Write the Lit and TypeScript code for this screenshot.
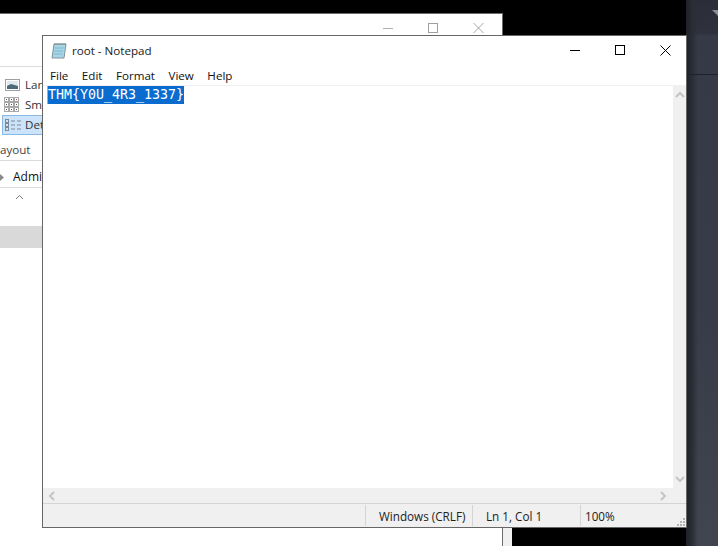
import { LitElement, html, css, svg } from "lit";
import { customElement } from "lit/decorators.js";

@customElement("app-root")
export class AppRoot extends LitElement {
  static styles = css`
    :host { display: block; }
    .desk { position: relative; width: 718px; height: 546px; background: #000; overflow: hidden; font-family: "Open Sans", "Noto Sans", sans-serif; color: #1a1a1a; }
    .side { position: absolute; left: 686px; top: 0; width: 32px; height: 546px; background: linear-gradient(90deg, #1e2027 0, #2a2d36 6px, rgba(0,0,0,0) 12px), linear-gradient(180deg, #2a2d37 0, #2f323c 34px, #363a46 35px, #383c48 320px, #41454f 546px); box-sizing: border-box; }
    .side-top { height: 75px; border-bottom: 1px solid #20222a; box-sizing: border-box; position: relative; }
    .back { position: absolute; left: 0; top: 13px; width: 503px; height: 533px; background: #fff; border-right: 1px solid #6b6b6b; box-sizing: border-box; border-top: 1px solid #6b6b6b; }
    .back-ctrl { position: absolute; left: 360px; top: 0; display: block; }
    .ribbon-line { position: absolute; left: 0; right: 0; height: 1px; background: #dcdcdc; }
    .item { position: absolute; left: 0; width: 70px; height: 20px; font-size: 11.6px; line-height: 20px; white-space: nowrap; display: flex; align-items: center; gap: 5px; padding-left: 4px; box-sizing: border-box; color: #333; }
    .item svg { flex: none; }
    .item.sel { background: #cce4fa; border: 1px solid #8bb9e5; padding-left: 1px; left: 2px; gap: 3px; }
    .layout { position: absolute; left: 0; top: 128px; font-size: 11.6px; line-height: 16px; color: #444; }
    .admin { position: absolute; left: 13px; top: 154px; font-size: 12px; line-height: 18px; color: #111; }
    .graybar { position: absolute; left: 0; top: 212px; width: 42px; height: 22px; background: #d9d9d9; }
    .arrow { position: absolute; display: block; }
    .note { position: absolute; left: 42px; top: 35px; width: 645px; height: 493px; background: #fff; border: 1px solid #666; box-sizing: border-box; display: flex; flex-direction: column; }
    .title { height: 29px; display: flex; align-items: center; padding-left: 8px; gap: 5px; font-size: 11.6px; flex: none; position: relative; }
    .title svg { flex: none; }
    .controls { position: absolute; right: 0; top: 0; display: block; }
    .menu { height: 20px; display: flex; align-items: center; padding-left: 7px; gap: 13.500px; font-size: 11.6px; flex: none; color: #111; }
    .rule { height: 1px; background: #f1f1f4; flex: none; }
    .content { flex: 1; display: flex; min-height: 0; }
    .text { flex: 1; padding: 0 0 0 4px; font-family: "DejaVu Sans Mono", "Liberation Mono", monospace; font-size: 13.3px; }
    .sel-text { background: #0a6ccf; color: #fff; display: block; width: 136px; height: 18px; line-height: 18px; border-left: 1px solid #e8a33d; white-space: nowrap; }
    .vbar { width: 13px; background: #f0f0f0; flex: none; display: flex; flex-direction: column; justify-content: space-between; align-items: center; padding: 5px 0; box-sizing: border-box; }
    .hbar { height: 16px; background: #f0f0f0; flex: none; display: flex; justify-content: space-between; align-items: center; padding: 0 19px 0 5px; box-sizing: border-box; border-bottom: 1px solid #d4d4d4; }
    .status { height: 23px; background: #f0f0f0; flex: none; display: flex; font-size: 11.7px; color: #222; position: relative; }
    .status .fill { flex: 1; }
    .cell { border-left: 1px solid #d4d4d4; box-sizing: border-box; display: flex; align-items: center; padding-left: 5px; margin: 1px 0; padding-top: 1px; }
    .c1 { width: 107px; padding-left: 13px; }
    .c2 { width: 108px; padding-left: 13px; }
    .c3 { width: 106px; padding-left: 4px; }
    .grip { position: absolute; right: 1px; bottom: 1px; display: block; }
    .sliver { position: absolute; left: 503px; top: 528px; width: 9px; height: 18px; background: #f0f0f0; box-sizing: border-box; }
  `;

  private chev(d: string, w = 10, h = 8) {
    return html`<svg width=${w} height=${h} viewBox="0 0 ${w} ${h}">${svg`<path d=${d} fill="none" stroke="#c4c4c4" stroke-width="2"/>`}</svg>`;
  }

  private cells() {
    const out = [];
    for (const y of [0, 5, 10]) {
      for (const x of [0, 5, 10]) {
        out.push(svg`<rect x=${x + 0.5} y=${y + 0.5} width="4" height="4" fill="#fff" stroke="#a8a8a8"/><rect x=${x + 2} y=${y + 2} width="1" height="1" fill=${y === 0 && x === 10 ? "#a04040" : "#555"}/>`);
      }
    }
    return out;
  }

  render() {
    return html`<div class="desk">
      <div class="side"><div class="side-top">
        <svg class="arrow" style="left:26px;top:10px" width="6" height="6" viewBox="0 0 6 6"><path d="M0 0h6v6z" fill="#8b8e96"/></svg>
      </div></div>

      <div class="back">
        <svg class="back-ctrl" width="142" height="24" viewBox="0 0 142 24">
          <path d="M23 14.500h10" stroke="#b0b0b0"/>
          <rect x="68.500" y="9.500" width="9" height="9" fill="none" stroke="#a0a0a0"/>
          <path d="M113.500 9l10 10M123.500 9l-10 10" stroke="#a8a8a8"/>
        </svg>
        <div class="ribbon-line" style="top:52px"></div>
        <div class="item" style="top:61px">
          <svg width="16" height="13" viewBox="0 0 16 13"><rect x="1.500" y=".5" width="14" height="11" fill="#fff" stroke="#9aa0a6"/><rect x="3" y="2" width="11" height="8" fill="#dfe8ec"/><path d="M3 7l4-2 7 2v3H3z" fill="#4a6a7c"/></svg><span>Large</span>
        </div>
        <div class="item" style="top:81px">
          <svg width="16" height="16" viewBox="0 0 16 16">${this.cells()}</svg><span>Small</span>
        </div>
        <div class="item sel" style="top:101px">
          <svg width="18" height="14" viewBox="0 0 18 14"><g fill="none" stroke="#7a8a99"><rect x="1.500" y="1.500" width="3" height="3"/><rect x="1.500" y="5.500" width="3" height="3"/><rect x="1.500" y="9.500" width="3" height="3"/><path d="M7 3h4M13 3h4M7 7h4M13 7h4M7 11h4M13 11h4"/></g></svg><span>Details</span>
        </div>
        <div class="ribbon-line" style="top:146px"></div>
        <div class="layout">ayout</div>
        <div class="ribbon-line" style="top:173px"></div>
        <svg class="arrow" style="left:0;top:159px" width="5" height="9" viewBox="0 0 5 9"><path d="M0 1l4 3.500L0 8z" fill="#8a8a8a"/></svg>
        <div class="admin">Administrator</div>
        <svg class="arrow" style="left:15px;top:180px" width="9" height="6" viewBox="0 0 9 6"><path d="M1 5l3.500-3.500L8 5" fill="none" stroke="#777"/></svg>
        <div class="graybar"></div>
      </div>

      <div class="sliver"></div>

      <div class="note">
        <div class="title">
          <svg width="16" height="17" viewBox="0 0 16 17"><path d="M3 2h12l-2 14H1z" fill="#a9d6e6" stroke="#7f929c"/><path d="M3.500 2h11" stroke="#666" stroke-dasharray="1 1"/><path d="M3.500 6h9M3 9h9M2.500 12h9" stroke="#7fb7cf"/></svg>
          <span>root - Notepad</span>
          <svg class="controls" width="138" height="29" viewBox="0 0 138 29">
            <path d="M22 14.500h10" stroke="#000"/>
            <rect x="67.500" y="9.500" width="9" height="9" fill="none" stroke="#000"/>
            <path d="M112.500 9.500l10 10M122.500 9.500l-10 10" stroke="#000"/>
          </svg>
        </div>
        <div class="menu"><span>File</span><span>Edit</span><span>Format</span><span>View</span><span>Help</span></div>
        <div class="rule"></div>
        <div class="content">
          <div class="text"><span class="sel-text">THM{Y0U_4R3_1337}</span></div>
          <div class="vbar">${this.chev("M1 6l4-4 4 4")}${this.chev("M1 2l4 4 4-4")}</div>
        </div>
        <div class="hbar">${this.chev("M6 1L2 5l4 4", 8, 10)}${this.chev("M2 1l4 4-4 4", 8, 10)}</div>
        <div class="status">
          <div class="fill"></div>
          <div class="cell c1">Windows (CRLF)</div>
          <div class="cell c2">Ln 1, Col 1</div>
          <div class="cell c3">100%</div>
          <svg class="grip" width="8" height="8" viewBox="0 0 8 8"><g fill="#b4b4b4"><rect x="6" y="0" width="2" height="2"/><rect x="3" y="3" width="2" height="2"/><rect x="6" y="3" width="2" height="2"/><rect x="0" y="6" width="2" height="2"/><rect x="3" y="6" width="2" height="2"/><rect x="6" y="6" width="2" height="2"/></g></svg>
        </div>
      </div>
    </div>`;
  }
}
